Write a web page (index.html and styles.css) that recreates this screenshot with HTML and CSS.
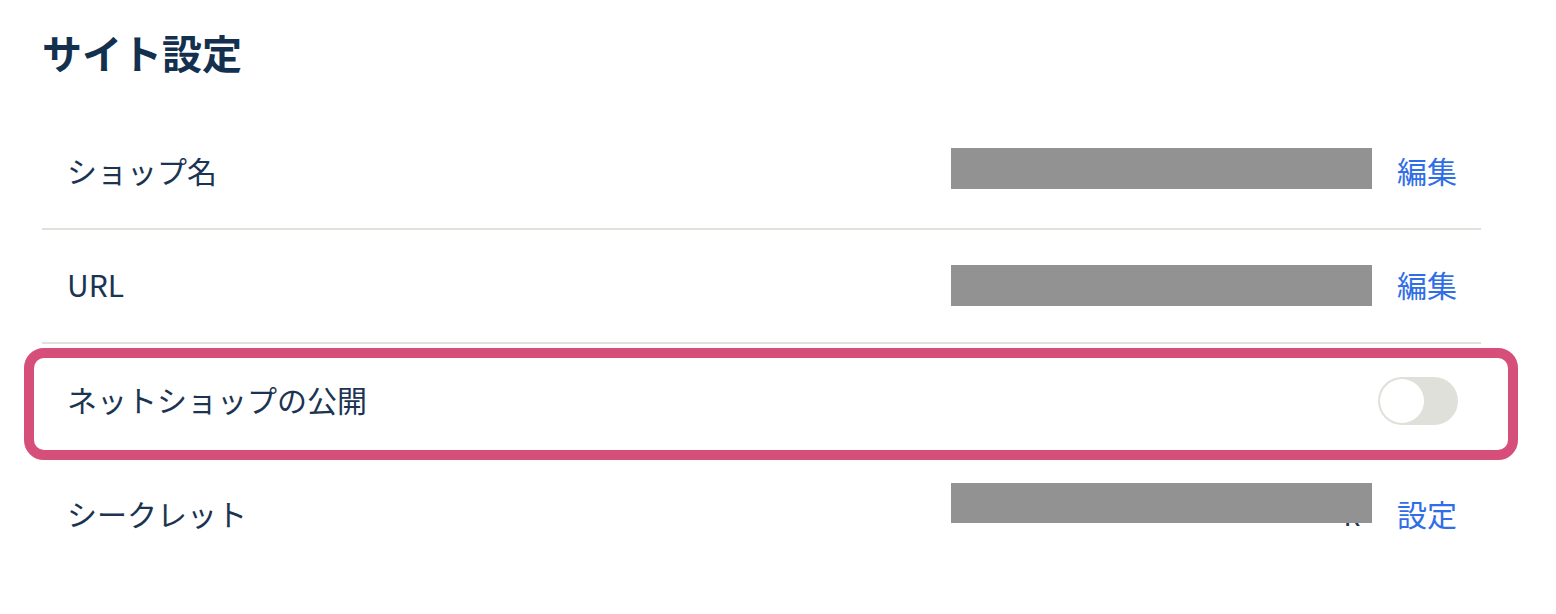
FILE: index.html
```html
<!DOCTYPE html>
<html lang="ja">
<head>
<meta charset="utf-8">
<title>サイト設定</title>
<link rel="stylesheet" href="styles.css">
</head>
<body>
<main class="settings">
  <h1 class="title">サイト設定</h1>
  <div class="list">
    <div class="row">
      <span class="label">ショップ名</span>
      <div class="value"><span class="redact"></span></div>
      <a class="link" href="#">編集</a>
    </div>
    <div class="row">
      <span class="label">URL</span>
      <div class="value value-url"><span class="redact"></span></div>
      <a class="link" href="#">編集</a>
    </div>
    <div class="row row-highlight">
      <span class="label">ネットショップの公開</span>
      <span class="toggle"><span class="knob"></span></span>
      <span class="highlight"></span>
    </div>
    <div class="row row-last">
      <span class="label">シークレット</span>
      <div class="value value-secret"><span class="secret-text">k</span><span class="redact"></span></div>
      <a class="link" href="#">設定</a>
    </div>
  </div>
</main>
</body>
</html>
```
FILE: styles.css
```css
html, body {
  margin: 0;
  padding: 0;
  background: #ffffff;
}

body {
  font-family: "Noto Sans CJK JP", "Noto Sans", sans-serif;
  color: #1b3452;
}

.settings {
  width: 1439px;
  margin-left: 42px;
  padding-top: 24px;
}

.title {
  margin: 0 0 36px 0;
  font-size: 40px;
  line-height: 56px;
  font-weight: 700;
  color: #14304f;
}

.list {
  display: flex;
  flex-direction: column;
}

.row {
  position: relative;
  display: flex;
  align-items: center;
  height: 114px;
  box-sizing: border-box;
  border-bottom: 2px solid #e1e1dc;
  padding: 0 24px 0 25px;
}

.row-highlight,
.row-last {
  border-bottom: none;
}

.label {
  flex: 1;
  font-size: 30px;
  line-height: 40px;
  margin-top: -4px;
  color: #1b3452;
}

.value {
  position: relative;
  width: 421px;
  height: 41px;
  margin-right: 25px;
  margin-top: -8px;
}

.value-url {
  margin-top: -2px;
}

.redact {
  position: absolute;
  left: 0;
  top: 0;
  width: 100%;
  height: 41px;
  background: #929292;
}

.value-secret {
  height: 57px;
  margin-top: -8px;
}

.value-secret .redact {
  height: 40px;
}

.secret-text {
  display: block;
  padding-top: 10px;
  padding-right: 12px;
  text-align: right;
  font-size: 30px;
  line-height: 41px;
  color: #1b3452;
}

.link {
  font-size: 30px;
  line-height: 40px;
  margin-top: -4px;
  color: #2f6ee6;
  text-decoration: none;
}

.toggle {
  display: flex;
  align-items: center;
  width: 80px;
  height: 48px;
  box-sizing: border-box;
  padding: 2px;
  border-radius: 24px;
  background: #dfe0da;
  margin-right: -1px;
}

.knob {
  width: 44px;
  height: 44px;
  border-radius: 50%;
  background: #ffffff;
}

.highlight {
  position: absolute;
  left: -18px;
  right: -37px;
  top: 4px;
  bottom: -2px;
  border: 10px solid #d64f7b;
  border-radius: 20px;
  pointer-events: none;
}
```
